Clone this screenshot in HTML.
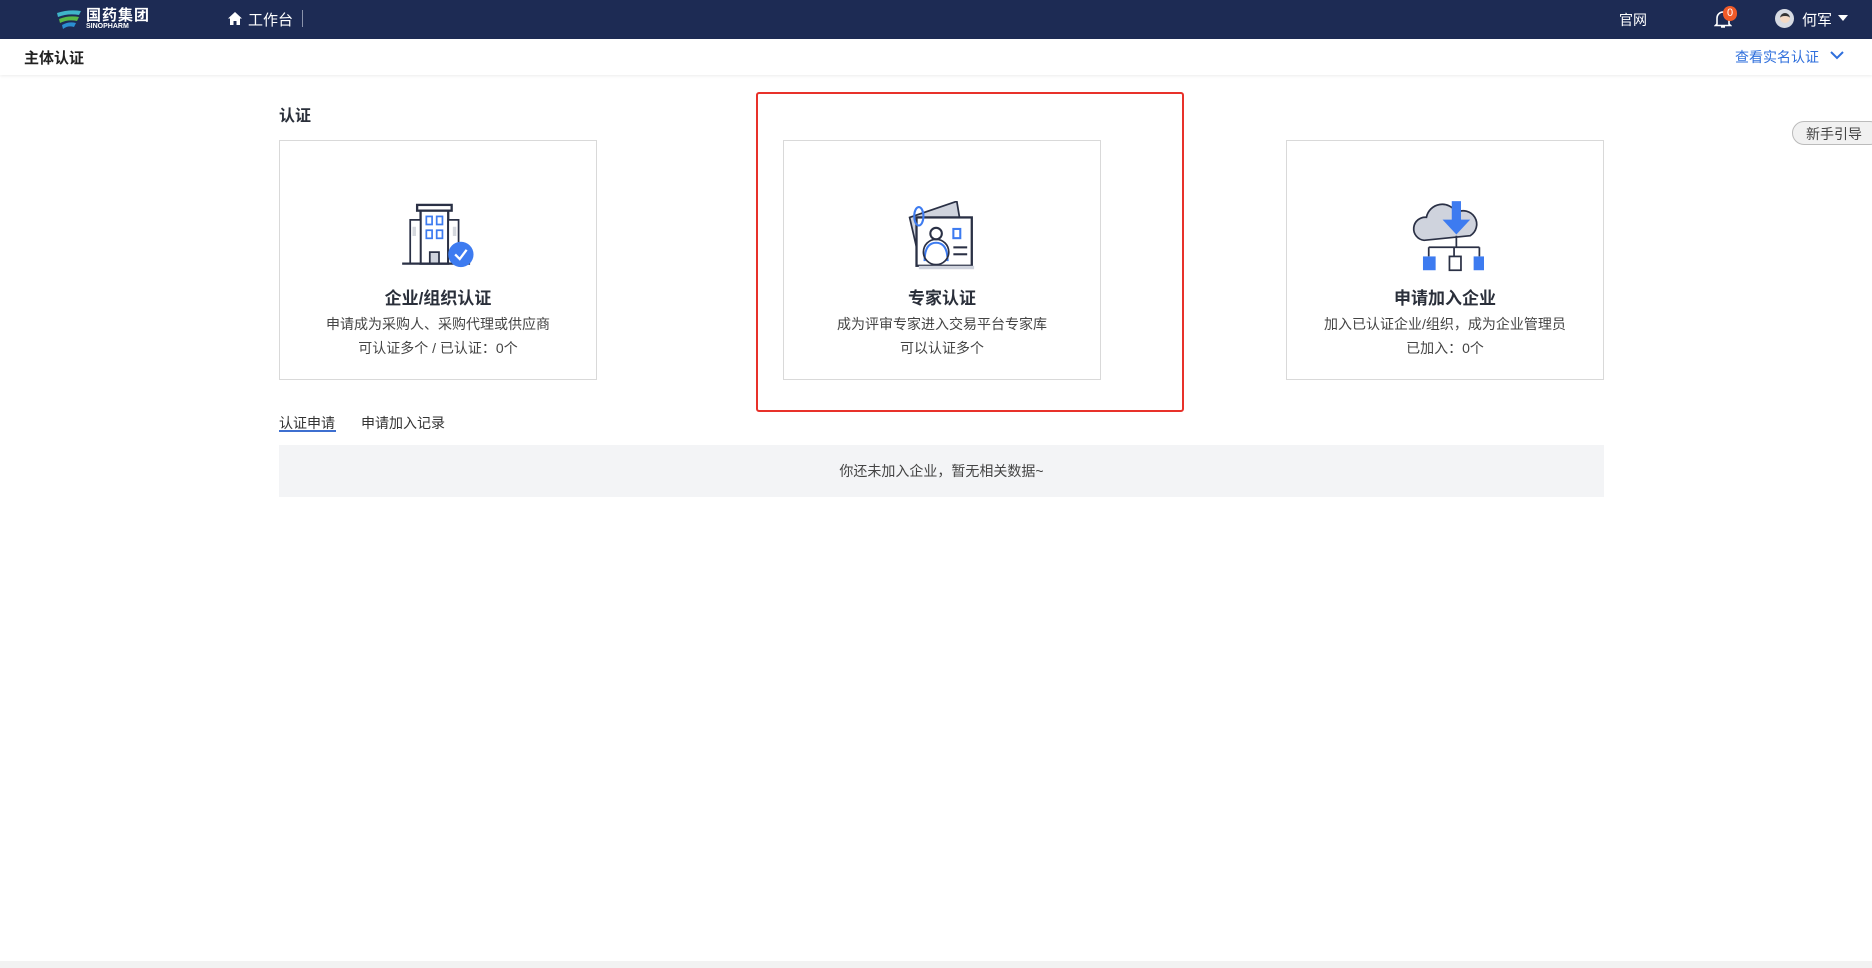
<!DOCTYPE html>
<html><head><meta charset="utf-8"><style>
*{margin:0;padding:0;box-sizing:border-box}
body{width:1872px;height:968px;background:#fff;font-family:"Liberation Sans","Noto Sans CJK SC",sans-serif;color:#333;position:relative;overflow:hidden}
.top{position:absolute;left:0;top:0;width:1872px;height:39px;background:#1d2b54;color:#fff;font-size:15px}
.sub{position:absolute;left:0;top:39px;width:1872px;height:36px;background:#fff;box-shadow:0 1px 3px rgba(0,0,0,.08)}
.abs{position:absolute}
.card{position:absolute;top:140px;width:318px;height:240px;border:1px solid #d9d9d9;text-align:center}
.card h3{position:absolute;top:143px;left:0;right:0;font-size:17px;color:#2a2f3a;font-weight:bold}
.card p{position:absolute;left:0;right:0;font-size:14px;color:#444}
.card svg{position:absolute;left:121px;top:60px}
</style></head><body>
<div class="top">
  <svg class="abs" style="left:55px;top:8px" width="28" height="24" viewBox="0 0 28 24">
    <path d="M2 5 Q14 1 26 3 L24 7 Q13 5 3 9Z" fill="#3fb5c9"/>
    <path d="M4 11 Q14 7 24 9 L22 13 Q13 11 5 15Z" fill="#58b947"/>
    <path d="M7 17 Q14 13 21 15 L19 19 Q13 17 8 21Z" fill="#2b8fd1"/>
  </svg>
  <div class="abs" style="left:86px;top:4px;font-size:15px;font-weight:bold;letter-spacing:1px">国药集团</div>
  <div class="abs" style="left:86px;top:23px;font-size:7px;font-weight:bold">SINOPHARM</div>
  <svg class="abs" style="left:228px;top:12px" width="14" height="13" viewBox="0 0 14 13"><path d="M7 0 L14 6.5 H12 V13 H8.5 V9 H5.5 V13 H2 V6.5 H0Z" fill="#fff"/></svg>
  <div class="abs" style="left:248px;top:9px">工作台</div>
  <div class="abs" style="left:302px;top:10px;width:1px;height:17px;background:#8a93ab"></div>
  <div class="abs" style="left:1619px;top:10px;font-size:14px">官网</div>
  <svg class="abs" style="left:1714px;top:9px" width="18" height="20" viewBox="0 0 18 20"><path d="M3 15 V9 A6 6 0 0 1 15 9 V15 L16.5 16.5 H1.5Z M7 18 H11" stroke="#fff" stroke-width="1.6" fill="none"/></svg>
  <div class="abs" style="left:1723px;top:6px;width:14px;height:15px;border-radius:7px;background:#f05a28;font-size:11px;text-align:center;line-height:15px">0</div>
  <div class="abs" style="left:1775px;top:9px;width:19px;height:19px;border-radius:50%;background:#d7dbe3;overflow:hidden"><div style="margin:4px auto 0;width:10px;height:10px;border-radius:50%;background:#f3d9c4;border-top:3px solid #333"></div></div>
  <div class="abs" style="left:1802px;top:9px">何军</div>
  <div class="abs" style="left:1838px;top:15px;border:5px solid transparent;border-top:6px solid #fff"></div>
</div>
<div class="sub">
  <div class="abs" style="left:24px;top:8px;font-size:15px;font-weight:bold;color:#222">主体认证</div>
  <div class="abs" style="left:1735px;top:8px;font-size:14px;color:#2f6fdc">查看实名认证</div>
  <svg class="abs" style="left:1830px;top:12px" width="14" height="9" viewBox="0 0 14 9"><path d="M1 1 L7 7 L13 1" stroke="#2f6fdc" stroke-width="2" fill="none"/></svg>
</div>
<div class="abs" style="left:1792px;top:121px;width:90px;height:24px;border:1px solid #bbb;border-radius:12px;background:#f1f1f1;font-size:14px;color:#444;padding:2px 0 0 13px">新手引导</div>
<div class="abs" style="left:279px;top:102px;font-size:16px;font-weight:bold;color:#2a2f3a">认证</div>

<div class="card" style="left:279px">
  <svg width="76" height="70" viewBox="0 0 66 60">
    <rect x="14" y="3" width="30" height="5" fill="#fff" stroke="#2a3045" stroke-width="2"/>
    <rect x="17" y="8" width="24" height="46" fill="#fff" stroke="#2a3045" stroke-width="2"/>
    <rect x="8" y="16" width="9" height="38" fill="#fff" stroke="#2a3045" stroke-width="1.5"/>
    <rect x="41" y="16" width="9" height="38" fill="#fff" stroke="#2a3045" stroke-width="1.5"/>
    <rect x="10" y="22" width="3" height="8" fill="#d5d8de"/><rect x="45" y="22" width="3" height="8" fill="#d5d8de"/>
    <rect x="22" y="13" width="5" height="7" fill="none" stroke="#3d7bf0" stroke-width="1.5"/><rect x="31" y="13" width="5" height="7" fill="none" stroke="#3d7bf0" stroke-width="1.5"/>
    <rect x="22" y="25" width="5" height="7" fill="none" stroke="#3d7bf0" stroke-width="1.5"/><rect x="31" y="25" width="5" height="7" fill="none" stroke="#3d7bf0" stroke-width="1.5"/>
    <rect x="25" y="44" width="8" height="10" fill="#cfd3dd" stroke="#2a3045" stroke-width="1.5"/>
    <line x1="1" y1="54" x2="60" y2="54" stroke="#2a3045" stroke-width="2"/>
    <circle cx="52" cy="46" r="11" fill="#3d7bf0"/><path d="M47 46 L51 50 L57 42" stroke="#fff" stroke-width="2" fill="none"/>
  </svg>
  <h3>企业/组织认证</h3>
  <p style="top:173px">申请成为采购人、采购代理或供应商</p>
  <p style="top:197px">可认证多个 / 已认证：0个</p>
</div>
<div class="card" style="left:783px">
  <svg width="76" height="72" viewBox="0 0 66 62">
    <path d="M4 14 L45 0 L49 24 L10 40Z" fill="#cfd3dd" stroke="#2a3045" stroke-width="1.5"/>
    <rect x="10" y="14" width="48" height="42" fill="#fff" stroke="#2a3045" stroke-width="2"/>
    <rect x="12" y="56" width="48" height="3" fill="#cfd3dd"/>
    <ellipse cx="12" cy="13" rx="4" ry="8" fill="none" stroke="#3d7bf0" stroke-width="1.8"/>
    <circle cx="27" cy="28" r="5" fill="none" stroke="#2a3045" stroke-width="1.8"/>
    <path d="M17 52 Q17 36 27 36 Q37 36 37 52" fill="none" stroke="#3d7bf0" stroke-width="1.8"/>
    <ellipse cx="27" cy="44" rx="11" ry="11" fill="none" stroke="#2a3045" stroke-width="1.5"/>
    <rect x="42" y="24" width="6" height="8" fill="none" stroke="#3d7bf0" stroke-width="1.8"/>
    <line x1="42" y1="40" x2="54" y2="40" stroke="#2a3045" stroke-width="1.8"/><line x1="42" y1="46" x2="54" y2="46" stroke="#2a3045" stroke-width="1.8"/>
  </svg>
  <h3>专家认证</h3>
  <p style="top:173px">成为评审专家进入交易平台专家库</p>
  <p style="top:197px">可以认证多个</p>
</div>
<div class="card" style="left:1286px">
  <svg width="76" height="74" viewBox="0 0 66 64">
    <path d="M14 34 A10 10 0 0 1 16 14 A14 14 0 0 1 42 10 A11 11 0 0 1 54 30 Z" fill="#cfd3dd" stroke="#2a3045" stroke-width="1.5"/>
    <rect x="38" y="0" width="8" height="18" fill="#3d7bf0"/><path d="M30 16 H54 L42 29Z" fill="#3d7bf0"/>
    <path d="M42 30 V40 M18 40 H62 M18 40 V48 M62 40 V48 M40 40 V48" stroke="#2a3045" stroke-width="1.5" fill="none"/>
    <rect x="13" y="48" width="11" height="12" fill="#3d7bf0"/><rect x="36" y="48" width="10" height="12" fill="#fff" stroke="#2a3045" stroke-width="1.5"/><rect x="57" y="48" width="11" height="12" fill="#3d7bf0"/>
  </svg>
  <h3>申请加入企业</h3>
  <p style="top:173px">加入已认证企业/组织，成为企业管理员</p>
  <p style="top:197px">已加入：0个</p>
</div>
<div class="abs" style="left:756px;top:92px;width:428px;height:320px;border:2px solid #e8312a;border-radius:3px"></div>

<div class="abs" style="left:279px;top:413px;font-size:14px;color:#333">认证申请</div>
<div class="abs" style="left:279px;top:430px;width:57px;height:2px;background:#3d6fd0"></div>
<div class="abs" style="left:361px;top:413px;font-size:14px;color:#333">申请加入记录</div>
<div class="abs" style="left:279px;top:445px;width:1325px;height:52px;background:#f3f4f6;text-align:center;font-size:14px;color:#444;line-height:52px">你还未加入企业，暂无相关数据~</div>
<div class="abs" style="left:0;top:961px;width:1872px;height:7px;background:#f2f2f2"></div>
</body></html>
